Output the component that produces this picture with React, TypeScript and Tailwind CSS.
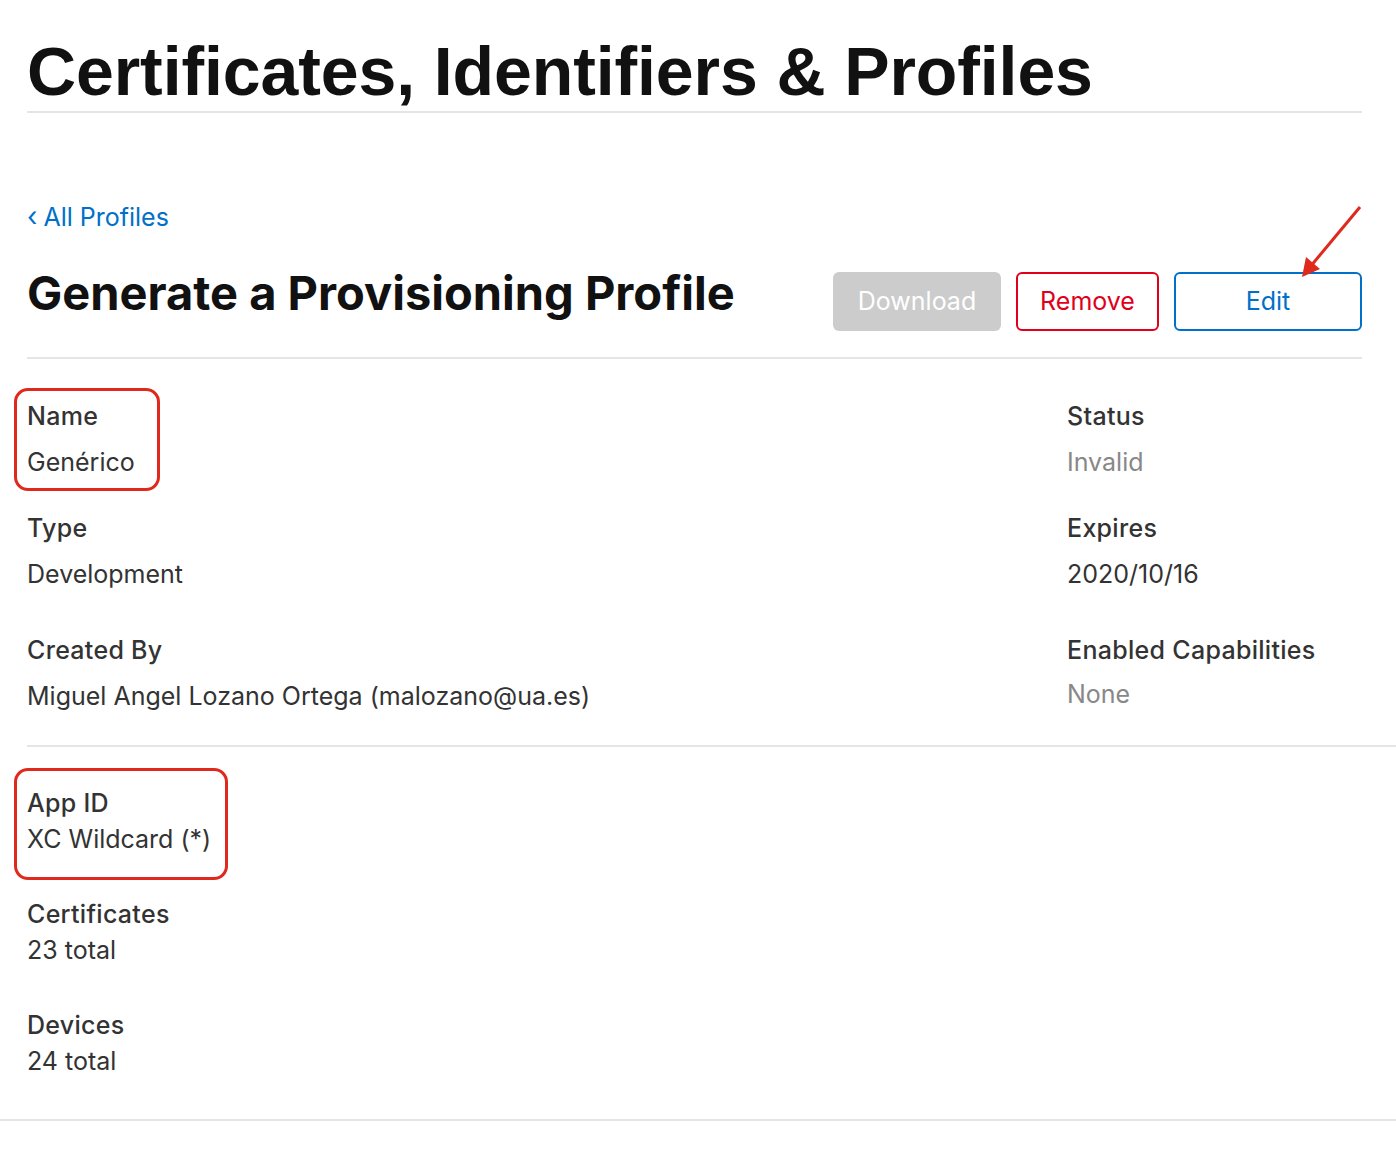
import React from "react";

function Field({
  label,
  value,
  muted,
  className = "",
  valueClass = "mt-[14px]",
}: {
  label: string;
  value: string;
  muted?: boolean;
  className?: string;
  valueClass?: string;
}) {
  return (
    <div className={className}>
      <div className="text-[25px] leading-[32px] font-medium tracking-[0.3px] text-[#333333]">{label}</div>
      <div
        className={`${valueClass} text-[25px] leading-[32px] ${
          muted ? "text-[#888888]" : "text-[#333333]"
        }`}
      >
        {value}
      </div>
    </div>
  );
}

export default function App() {
  return (
    <div className="w-[1396px] min-h-[1154px] bg-white font-['Inter',sans-serif] antialiased">
      <div className="px-[27px] pr-[34px]">
        <h1 className="pt-[37px] pb-[5px] border-b-2 border-[#e5e5e5] font-['Liberation_Sans',Arial,sans-serif] font-bold text-[68px] leading-[69px] tracking-[-0.1px] text-[#111111]">
          Certificates, Identifiers &amp; Profiles
        </h1>

        <a className="mt-[88px] flex items-center gap-[6px] text-[25px] leading-[32px] text-[#0070c9]">
          <span className="text-[27px]">‹</span>
          <span>All Profiles</span>
        </a>

        <div className="mt-[30px] flex items-start justify-between pb-[26px] border-b-2 border-[#e5e5e5]">
          <h2 className="text-[47px] leading-[60px] font-bold text-[#111111]">
            Generate a Provisioning Profile
          </h2>
          <div className="relative mt-[9px] flex items-center gap-[15px]">
            <button className="h-[59px] w-[168px] rounded-[6px] bg-[#cccccc] text-[25px] text-white">
              Download
            </button>
            <button className="h-[59px] w-[143px] rounded-[6px] border-2 border-[#e0001b] text-[25px] text-[#e0001b]">
              Remove
            </button>
            <button className="h-[59px] w-[188px] rounded-[6px] border-2 border-[#0070c9] text-[25px] text-[#0070c9]">
              Edit
            </button>
            <svg
              className="absolute right-[-4px] top-[-67px]"
              width="70"
              height="78"
              viewBox="0 0 70 78"
            >
              <line x1="64" y1="2" x2="14" y2="62" stroke="#e0291d" strokeWidth="3" />
              <polygon points="6,72 10,52 24,64" fill="#e0291d" />
            </svg>
          </div>
        </div>
      </div>

      <div className="px-[27px] grid grid-cols-[1040px_1fr] pt-[41px] pb-[33px]">
        <div className="flex flex-col">
          <div className="relative">
            <div className="absolute left-[-13px] top-[-12px] w-[146px] h-[103px] rounded-[14px] border-[3px] border-[#e0291d]" />
            <Field label="Name" value="Genérico" />
          </div>
          <Field className="mt-[34px]" label="Type" value="Development" />
          <Field className="mt-[44px]" label="Created By" value="Miguel Angel Lozano Ortega (malozano@ua.es)" />
        </div>
        <div className="flex flex-col">
          <Field label="Status" value="Invalid" muted />
          <Field className="mt-[34px]" label="Expires" value="2020/10/16" />
          <Field className="mt-[44px]" label="Enabled Capabilities" value="None" muted valueClass="mt-[12px]" />
        </div>
      </div>

      <div className="ml-[27px] border-t-2 border-[#e5e5e5]" />

      <div className="px-[27px] pt-[40px] pb-[42px]">
        <div className="relative">
          <div className="absolute left-[-13px] top-[-19px] w-[214px] h-[112px] rounded-[14px] border-[3px] border-[#e0291d]" />
          <Field label="App ID" value="XC Wildcard (*)" valueClass="mt-[4px]" />
        </div>
        <Field className="mt-[43px]" label="Certificates" value="23 total" valueClass="mt-[4px]" />
        <Field className="mt-[43px]" label="Devices" value="24 total" valueClass="mt-[4px]" />
      </div>

      <div className="border-t-2 border-[#e5e5e5]" />
    </div>
  );
}
